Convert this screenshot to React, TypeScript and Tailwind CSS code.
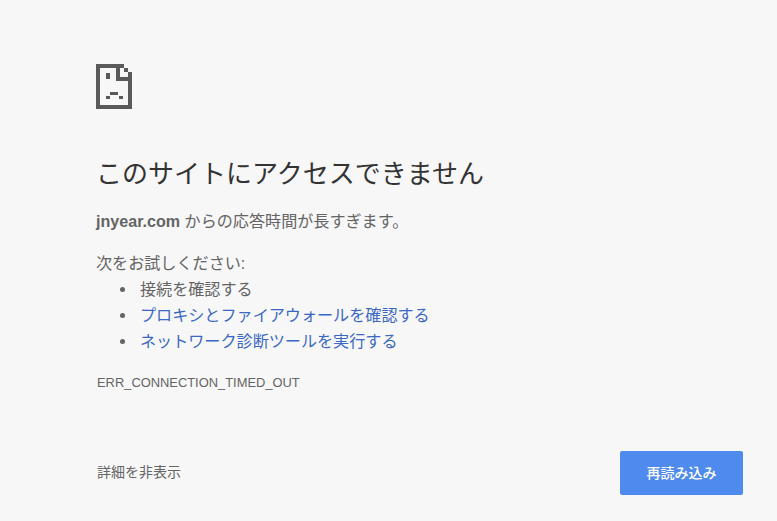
import React from 'react';

const cjk = "font-['Liberation_Sans','Noto_Sans_CJK_JP',sans-serif]";

function SadTab() {
  return (
    <svg width="36" height="45" viewBox="0 0 36 45" className="block" fill="#5a5a5a" shapeRendering="crispEdges">
      <rect x="0" y="0" width="4" height="45" />
      <rect x="0" y="0" width="28" height="4" />
      <rect x="0" y="41" width="36" height="4" />
      <rect x="32" y="8" width="4" height="37" />
      <rect x="28" y="4" width="4" height="4" />
      <rect x="20" y="4" width="4" height="13" />
      <rect x="20" y="13" width="16" height="4" />
      <rect x="10" y="9" width="4" height="6" />
      <rect x="14" y="28" width="8" height="3" />
      <rect x="10" y="32" width="4" height="3" />
      <rect x="23" y="32" width="4" height="3" />
    </svg>
  );
}

export default function App() {
  return (
    <div className={`${cjk} w-[777px] h-[521px] bg-[#f7f7f7] text-[#646464] flex flex-col pl-[96px] pr-[34px] overflow-hidden`}>
      <div className="pt-[64px]">
        <SadTab />
      </div>

      <h1 className="mt-[47px] text-[26px] leading-[36px] font-normal text-[#333333]">
        このサイトにアクセスできません
      </h1>

      <p className="mt-[16px] text-[16.1px] leading-[26px]">
        <strong className="font-bold">jnyear.com</strong> からの応答時間が長すぎます。
      </p>

      <p className="mt-[16px] text-[16.1px] leading-[26px]">次をお試しください:</p>

      <ul className="text-[16.1px] leading-[26px] pl-[44px]">
        <li className="relative">
          <span className="absolute -left-[20px] top-[11px] w-[5px] h-[5px] rounded-full bg-[#646464]" />
          接続を確認する
        </li>
        <li className="relative text-[#3b68c4]">
          <span className="absolute -left-[20px] top-[11px] w-[5px] h-[5px] rounded-full bg-[#646464]" />
          プロキシとファイアウォールを確認する
        </li>
        <li className="relative text-[#3b68c4]">
          <span className="absolute -left-[20px] top-[11px] w-[5px] h-[5px] rounded-full bg-[#646464]" />
          ネットワーク診断ツールを実行する
        </li>
      </ul>

      <div className="mt-[20px] text-[12.9px] leading-[18px] pl-px">ERR_CONNECTION_TIMED_OUT</div>

      <div className="mt-[59px] flex items-center justify-between">
        <span className="text-[14px] leading-[20px] pl-px -translate-y-px">詳細を非表示</span>
        <button className="w-[123px] h-[44px] rounded-[2px] bg-[#4f8bef] text-white text-[14px] font-medium">
          再読み込み
        </button>
      </div>
    </div>
  );
}
